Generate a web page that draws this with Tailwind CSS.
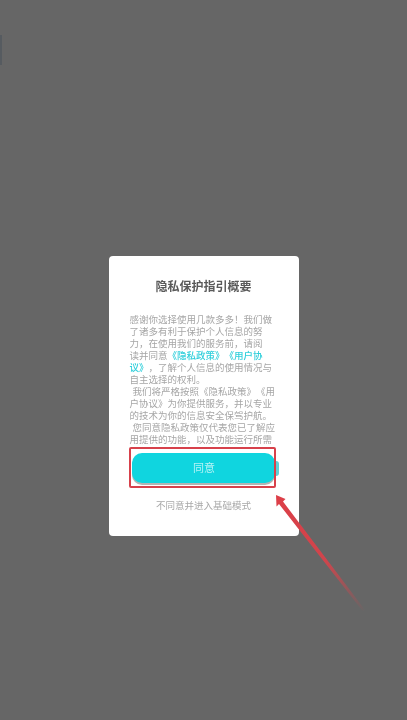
<!DOCTYPE html>
<html lang="zh-CN">
<head>
    <meta charset="UTF-8">
    <meta name="viewport" content="width=device-width, initial-scale=1.0">
    <title>隐私保护指引概要</title>
    <script src="https://cdn.jsdelivr.net/npm/@tailwindcss/browser@4"></script>
</head>
<body class="bg-[#666666] font-['Liberation_Sans','Noto_Sans_CJK_SC',sans-serif]">
    <div class="relative w-[407px] h-[720px] overflow-hidden flex justify-center pt-[256px]">
        <!-- edge of the page behind the overlay -->
        <div class="absolute left-0 top-[35px] w-[1.5px] h-[30px] bg-[#565b60]"></div>

        <!-- dialog -->
        <div class="relative w-[190px] h-[280px] bg-white rounded-[4px] flex flex-col items-center">
            <h1 class="mt-[23px] text-[12px] leading-[16px] font-bold text-[#5a5a5a] blur-[0.5px]">隐私保护指引概要</h1>

            <p class="mt-[19px] self-start ml-[21px] whitespace-nowrap text-[9.5px] leading-[12px] text-[#a6a6a6] blur-[0.5px] [text-spacing-trim:space-all]">
                感谢你选择使用几款多多！我们做<br>
                了诸多有利于保护个人信息的努<br>
                力，在使用我们的服务前，请阅<br>
                读并同意<span class="text-[#2fcfdb] font-medium">《隐私政策》《用户协<br>议》</span>，了解个人信息的使用情况与<br>
                自主选择的权利。<br>
                <span class="ml-[3px]">我们将严格按照《隐私政策》《用</span><br>
                户协议》为你提供服务，并以专业<br>
                的技术为你的信息安全保驾护航。<br>
                <span class="ml-[3px]">您同意隐私政策仅代表您已了解应</span><br>
                用提供的功能，以及功能运行所需
            </p>

            <button class="mt-[7px] self-start ml-[23px] pl-[2px] w-[143px] h-[30px] shrink-0 rounded-[10px] bg-[#10d5df] text-[11px] text-[#b5f3f5] blur-[0.4px] shadow-[0_2px_0_#b4b4b4]">同意</button>
            <div class="mt-[17px] text-[9.5px] leading-[12px] text-[#a8a8a8] blur-[0.5px] [text-spacing-trim:space-all]">不同意并进入基础模式</div>

            <!-- button's round end showing past the red frame -->
            <div class="absolute left-[167px] top-[205px] w-[3.5px] h-[15px] rounded-r-full bg-[#5fd0d6]"></div>
            <!-- red frame drawn on the screenshot -->
            <div class="absolute left-[20px] top-[191px] w-[147px] h-[41px] border-[2px] border-[#d7414b] rounded-[2px]"></div>
        </div>

        <!-- red arrow drawn on the screenshot -->
        <svg class="absolute left-[260px] top-[470px]" width="147" height="170" viewBox="0 0 147 170">
            <defs>
                <linearGradient id="fade" gradientUnits="userSpaceOnUse" x1="18" y1="28" x2="104" y2="142">
                    <stop offset="0" stop-color="#dd3f48"></stop>
                    <stop offset="0.55" stop-color="#cf454c"></stop>
                    <stop offset="1" stop-color="#c9474d" stop-opacity="0"></stop>
                </linearGradient>
            </defs>
            <polygon points="16,25 25.5,29 23,31.5 105,140 103,141.5 19,34 16.5,36.5" fill="url(#fade)"></polygon>
        </svg>
    </div>
</body>
</html>
